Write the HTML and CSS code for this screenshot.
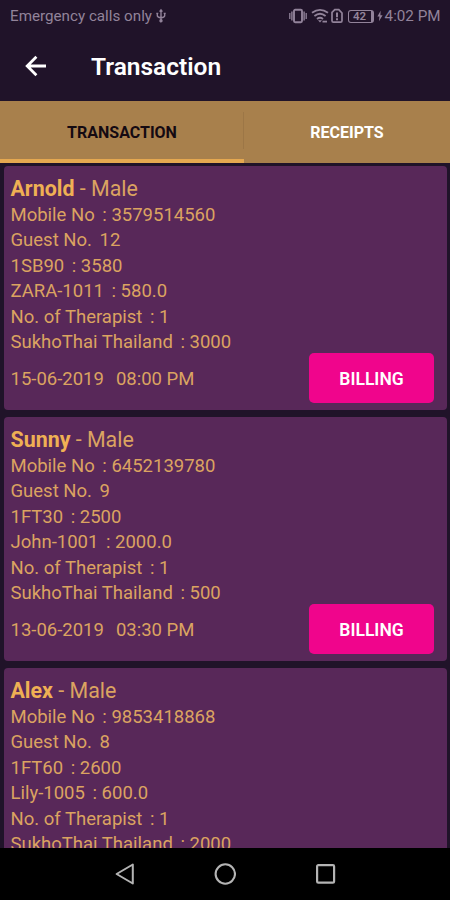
FILE: index.html
```html
<!DOCTYPE html>
<html lang="en">
<head>
<meta charset="utf-8">
<title>Transaction</title>
<link rel="stylesheet" href="styles.css">
</head>
<body>
<div class="screen">
  <div class="status">
    <span class="carrier">Emergency calls only</span>
    <svg class="usb" width="10" height="16" viewBox="0 0 10 16" fill="none" stroke="currentColor" stroke-width="1.4"><path d="M5 2v11M1.3 5v2.6q0 2 3.7 2.2M8.7 5v2.6q0 2-3.7 2.2M3.6 3.6 5 1.8l1.4 1.8M0.3 5.4h2M7.7 5.4h2"/><circle cx="5" cy="12.8" r="1" fill="currentColor"/></svg>
    <span class="fill"></span>
    <svg class="vib" width="18" height="16" viewBox="0 0 18 16" fill="none" stroke="currentColor" stroke-width="1.9"><rect x="5" y="1.8" width="8" height="12.4" rx="1.2"/><path d="M2.9 3.5v9M15.1 3.5v9" stroke-width="1.4"/><path d="M.8 5v6M17.2 5v6" stroke-width="1.3"/></svg>
    <svg class="wifi" width="18" height="16" viewBox="0 0 18 16" fill="none" stroke="currentColor" stroke-width="1.8"><path d="M1 4.8q8-6 16 0M3.4 8q5.6-4.6 11.2 0M6 11q3-2.4 6 0"/><path d="M7 12.3h4L9 14.6z" fill="currentColor" stroke="none"/><path d="M11.5 13.6h4.5"/></svg>
    <svg class="sim" width="12" height="16" viewBox="0 0 12 16" fill="none" stroke="currentColor" stroke-width="1.7"><path d="M3.8 1.6h4L11 5v7.8q0 1.4-1.4 1.4H2.4Q1 14.2 1 12.8V4.4z"/><path d="M6 4.5v4.7M6 10.3v2" stroke-width="2"/></svg>
    <span class="battery">42</span>
    <svg class="bolt" width="6" height="12" viewBox="0 0 6 12" fill="currentColor"><path d="M3.6.8.4 6.5h2L2 11.2l3.6-6H3.4z"/></svg>
    <span class="clock">4:02 PM</span>
  </div>
  <header class="bar">
    <svg class="back" width="22" height="22" viewBox="0 0 22 22" fill="none" stroke="#fff" stroke-width="2.8"><path d="M21 11H2.5M11.4 1.8 2.2 11l9.2 9.2"/></svg>
    <h1>Transaction</h1>
  </header>
  <nav class="tabs">
    <div class="tab active">TRANSACTION</div>
    <div class="tab">RECEIPTS</div>
  </nav>
  <main class="list">
    <section class="card">
      <h2><b>Arnold</b> - Male</h2>
      <p>Mobile No <span class="val">: 3579514560</span></p>
      <p>Guest No. <span class="val">12</span></p>
      <p>1SB90 <span class="val">: 3580</span></p>
      <p>ZARA-1011 <span class="val">: 580.0</span></p>
      <p>No. of Therapist <span class="val">: 1</span></p>
      <p>SukhoThai Thailand <span class="val">: 3000</span></p>
      <div class="foot"><span class="date">15-06-2019</span><span>08:00 PM</span><button>BILLING</button></div>
    </section>
    <section class="card">
      <h2><b>Sunny</b> - Male</h2>
      <p>Mobile No <span class="val">: 6452139780</span></p>
      <p>Guest No. <span class="val">9</span></p>
      <p>1FT30 <span class="val">: 2500</span></p>
      <p>John-1001 <span class="val">: 2000.0</span></p>
      <p>No. of Therapist <span class="val">: 1</span></p>
      <p>SukhoThai Thailand <span class="val">: 500</span></p>
      <div class="foot"><span class="date">13-06-2019</span><span>03:30 PM</span><button>BILLING</button></div>
    </section>
    <section class="card">
      <h2><b>Alex</b> - Male</h2>
      <p>Mobile No <span class="val">: 9853418868</span></p>
      <p>Guest No. <span class="val">8</span></p>
      <p>1FT60 <span class="val">: 2600</span></p>
      <p>Lily-1005 <span class="val">: 600.0</span></p>
      <p>No. of Therapist <span class="val">: 1</span></p>
      <p>SukhoThai Thailand <span class="val">: 2000</span></p>
    </section>
  </main>
  <footer class="nav">
    <svg width="20" height="22" viewBox="0 0 20 22" fill="none" stroke="#b4b4b4" stroke-width="2" stroke-linejoin="round"><path d="M18.8 1.5v19L2.6 11z"/></svg>
    <svg width="22" height="22" viewBox="0 0 22 22" fill="none" stroke="#b4b4b4" stroke-width="2.1"><circle cx="11.3" cy="11" r="9.7"/></svg>
    <svg width="20" height="20" viewBox="0 0 20 20" fill="none" stroke="#b4b4b4" stroke-width="2.2"><rect x="1.1" y="1.2" width="17" height="17.4" rx="1.2"/></svg>
  </footer>
</div>
</body>
</html>
```
FILE: styles.css
```css
* { box-sizing: border-box; margin: 0; padding: 0; }
body { font-family: Roboto, "Liberation Sans", sans-serif; background: #201329; }
.screen { width: 450px; height: 900px; overflow: hidden; display: flex; flex-direction: column; background: #201329; }
.status { height: 32px; flex: none; display: flex; align-items: center; padding: 0 9.5px 0 10px; color: #92839a; font-size: 15.2px; white-space: nowrap; }
.usb { margin-left: 4px; }
.fill { flex: 1; }
.wifi { margin-left: 4px; }
.sim { margin-left: 2px; }
.battery { width: 26px; height: 13px; margin-left: 5px; border: 1.5px solid #92839a; border-right-width: 3px; border-radius: 3px; font-size: 11.5px; line-height: 11px; font-weight: 600; text-align: center; }
.bolt { margin: 0 2px 0 3px; }
.bar { height: 68px; flex: none; display: flex; align-items: center; padding-left: 25px; color: #fff; }
.back { flex: none; }
h1 { margin: 1px 0 0 44px; font-size: 24.5px; font-weight: 600; line-height: 30px; }
.tabs { height: 63px; flex: none; display: grid; grid-template-columns: 244px 1fr; background: linear-gradient(#a8804c, #a8804c) no-repeat 0 1px / 100% 62px; }
.tab { display: flex; align-items: center; justify-content: center; padding-top: 1px; color: #fff; font-size: 16px; font-weight: 700; }
.tab.active { color: #140a12; border-bottom: 4px solid #e5a850; padding-top: 5px; background: linear-gradient(#9c7646, #9c7646) no-repeat right 12px / 1px 37px; }
.list { flex: 1; min-height: 0; overflow: hidden; display: flex; flex-direction: column; gap: 7px; padding: 3px 3px 0 4px; }
.card { height: 244px; flex: none; padding: 8px 13px 0 6.5px; border-radius: 4px; background: #582859; color: #dba361; font-size: 18.5px; line-height: 25.4px; white-space: nowrap; }
h2 { font-size: 21.4px; font-weight: 400; line-height: 29px; }
h2 b { font-weight: 700; color: #efb054; }
.val { margin-left: 3px; }
.foot { display: flex; align-items: center; height: 50px; margin-top: -2.4px; padding-top: 3px; }
.date { margin-right: 12px; }
.foot button { width: 125px; height: 50px; margin: -3px 0 0 auto; padding-top: 1px; border: 0; border-radius: 5px; background: #f0058c; color: #fff; font: 600 17.5px Roboto, sans-serif; }
.nav { height: 52px; flex: none; display: flex; align-items: center; justify-content: center; gap: 80px; background: #000; }
```
